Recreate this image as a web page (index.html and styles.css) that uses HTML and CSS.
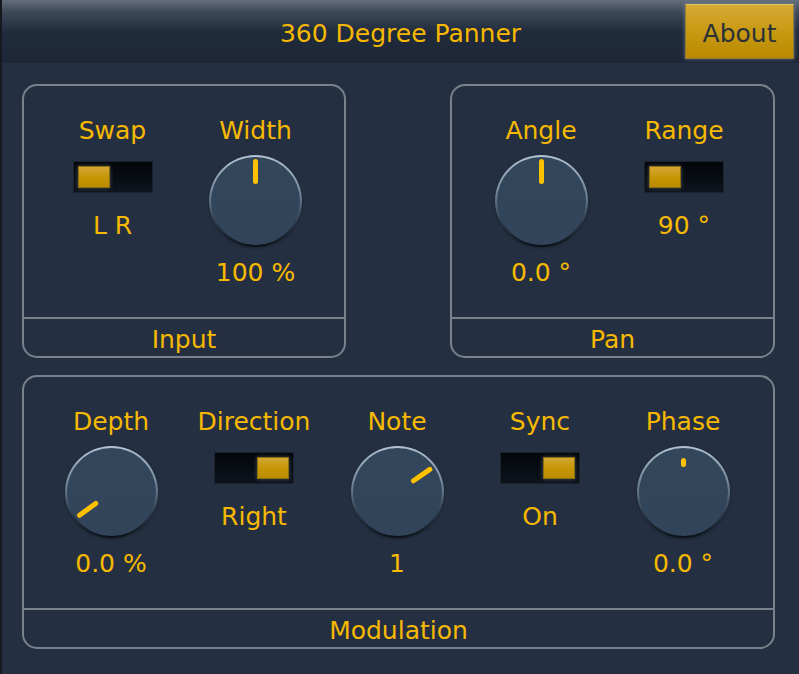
FILE: index.html
```html
<!DOCTYPE html>
<html lang="en">
<head>
    <meta charset="UTF-8">
    <meta name="viewport" content="width=device-width, initial-scale=1.0">
    <title>360 Degree Panner</title>
    <link rel="stylesheet" href="styles.css">
</head>
<body>
    <div class="app">
        <header class="topbar">
            <div></div>
            <h1 class="title">360 Degree Panner</h1>
            <div class="about-wrap">
                <button class="about">About</button>
            </div>
        </header>

        <main class="panels">
            <div class="row">
                <section class="panel panel-input">
                    <div class="controls">
                        <div class="control">
                            <div class="label">Swap</div>
                            <div class="switch"><span class="thumb"></span></div>
                            <div class="switch-value">L R</div>
                        </div>
                        <div class="control">
                            <div class="label">Width</div>
                            <div class="knob">
                                <div class="needle-wrap" style="transform: rotate(0deg)"><span class="needle"></span></div>
                            </div>
                            <div class="value">100 %</div>
                        </div>
                    </div>
                    <div class="panel-name">Input</div>
                </section>

                <section class="panel panel-pan">
                    <div class="controls">
                        <div class="control">
                            <div class="label">Angle</div>
                            <div class="knob">
                                <div class="needle-wrap" style="transform: rotate(0deg)"><span class="needle"></span></div>
                            </div>
                            <div class="value">0.0 °</div>
                        </div>
                        <div class="control">
                            <div class="label">Range</div>
                            <div class="switch"><span class="thumb"></span></div>
                            <div class="switch-value">90 °</div>
                        </div>
                    </div>
                    <div class="panel-name">Pan</div>
                </section>
            </div>

            <section class="panel panel-mod">
                <div class="controls">
                    <div class="control">
                        <div class="label">Depth</div>
                        <div class="knob">
                            <div class="needle-wrap" style="transform: rotate(-126deg)"><span class="needle"></span></div>
                        </div>
                        <div class="value">0.0 %</div>
                    </div>
                    <div class="control">
                        <div class="label">Direction</div>
                        <div class="switch on"><span class="thumb"></span></div>
                        <div class="switch-value">Right</div>
                    </div>
                    <div class="control">
                        <div class="label">Note</div>
                        <div class="knob">
                            <div class="needle-wrap" style="transform: rotate(55deg)"><span class="needle"></span></div>
                        </div>
                        <div class="value">1</div>
                    </div>
                    <div class="control">
                        <div class="label">Sync</div>
                        <div class="switch on"><span class="thumb"></span></div>
                        <div class="switch-value">On</div>
                    </div>
                    <div class="control">
                        <div class="label">Phase</div>
                        <div class="knob">
                            <div class="needle-wrap" style="transform: rotate(0deg)"><span class="needle short"></span></div>
                        </div>
                        <div class="value">0.0 °</div>
                    </div>
                </div>
                <div class="panel-name">Modulation</div>
            </section>
        </main>
    </div>
</body>
</html>
```

FILE: styles.css
```css
* {
    box-sizing: border-box;
}

body {
    margin: 0;
    padding: 0;
    background-color: #243042;
    font-family: "DejaVu Sans", sans-serif;
    font-size: 25px;
    color: #f7b900;
}

.app {
    min-height: 674px;
    border-left: 2px solid #151a21;
}

/* top bar */
.topbar {
    display: grid;
    grid-template-columns: 1fr auto 1fr;
    align-items: center;
    height: 63px;
    background: linear-gradient(to bottom, #646e7b 0, #3d4858 12px, #202b3b 32px, #1c2636 100%);
}

.title {
    margin: 0;
    padding-top: 4px;
    font-size: 25px;
    font-weight: normal;
    line-height: 28px;
}

.about-wrap {
    justify-self: end;
    padding-right: 5px;
}

.about {
    width: 109px;
    height: 55px;
    padding: 3px 0 0;
    border: 1px solid #8d7a3c;
    border-top-color: #e2c461;
    background: linear-gradient(to bottom, #d5a935 0, #c89a12 50%, #b98a00 100%);
    box-shadow: 0 0 4px rgba(150, 160, 170, 0.6);
    font-family: "DejaVu Sans", sans-serif;
    font-size: 25px;
    color: #2b3139;
    cursor: pointer;
}

/* panels */
.panels {
    padding: 21px 24px 0 20px;
}

.row {
    display: flex;
    justify-content: space-between;
    margin-bottom: 17px;
}

.panel {
    display: flex;
    flex-direction: column;
    height: 274px;
    border: 2px solid #79828c;
    border-radius: 15px;
}

.panel-input {
    width: 324px;
}

.panel-pan {
    width: 325px;
}

.panel-mod {
    width: 753px;
}

.panel-mod .controls {
    padding-right: 3px;
}

.controls {
    flex: 1;
    display: flex;
    justify-content: center;
    padding-top: 31px;
}

.control {
    width: 143px;
    display: flex;
    flex-direction: column;
    align-items: center;
}

.label,
.value,
.switch-value {
    line-height: 28px;
    white-space: nowrap;
}

.value {
    margin-top: 12px;
}

.switch-value {
    margin-top: 19px;
}

.panel-name {
    height: 39px;
    padding-top: 2px;
    border-top: 2px solid #79828c;
    line-height: 37px;
    text-align: center;
}

/* knobs */
.knob {
    position: relative;
    width: 93px;
    height: 92px;
    margin-top: 10px;
    border: 2px solid transparent;
    border-radius: 50%;
    background:
        linear-gradient(#33475c, #31445a) padding-box,
        linear-gradient(to bottom, #b3c3d3 0, #74879a 40%, #2a3848 75%, #0b1016 100%) border-box;
    box-shadow: 0 1px 3px rgba(0, 0, 0, 0.35);
}

.needle-wrap {
    position: absolute;
    top: 0;
    left: 0;
    right: 0;
    bottom: 0;
}

.needle {
    position: absolute;
    top: 2px;
    left: 50%;
    width: 5px;
    height: 25px;
    margin-left: -2.5px;
    border-radius: 3px;
    background-color: #ffc000;
}

.needle.short {
    top: 10px;
    height: 9px;
}

/* switches */
.switch {
    display: flex;
    width: 80px;
    height: 32px;
    margin-top: 16px;
    padding: 4px;
    border: 1px solid #1b2330;
    background: linear-gradient(to bottom, #03060a, #0d141c);
}

.switch.on {
    justify-content: flex-end;
}

.thumb {
    width: 32px;
    height: 100%;
    border: 1px solid #8a6d12;
    background: linear-gradient(to bottom, #d3a734, #c49400 60%, #bb8c00);
    box-shadow: 0 0 4px rgba(120, 130, 140, 0.55);
}
```
